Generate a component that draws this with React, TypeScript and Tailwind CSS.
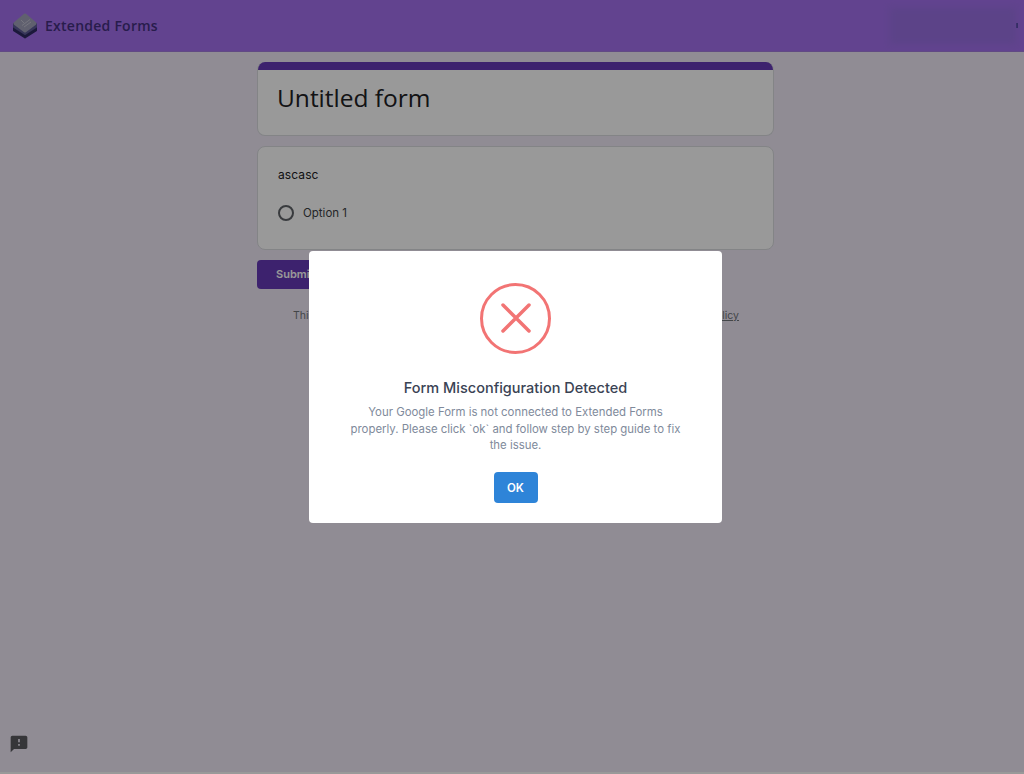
import React from 'react'

function Logo() {
  return (
    <svg width="26" height="26" viewBox="0 0 26 26" className="shrink-0" strokeLinejoin="round">
      <path d="M2 14 L13 8 L24 14 L24 17.5 L13 24.5 L2 17.5 Z" fill="#2f2a63" stroke="#2f2a63" strokeWidth="2" />
      <path d="M2 11 L13 5 L24 11 L24 14 L13 21 L2 14 Z" fill="#5d5a96" stroke="#5d5a96" strokeWidth="2" />
      <path d="M3 10.5 L13 2 L23 10.5 L13 18 Z" fill="#a0a0ba" stroke="#a0a0ba" strokeWidth="3" />
      <path d="M9 7 L12 10 M18 6.5 L10 12.5 M19 9 L12 14" stroke="#c4c4d2" strokeWidth="1" fill="none" />
    </svg>
  )
}

function FeedbackIcon() {
  return (
    <svg width="20" height="20" viewBox="0 0 24 24" fill="#5a5a60">
      <path d="M20 2H4c-1.1 0-1.99.9-1.99 2L2 22l4-4h14c1.1 0 2-.9 2-2V4c0-1.1-.9-2-2-2zm-7 12h-2v-2h2v2zm0-4h-2V6h2v4z" />
    </svg>
  )
}

function ErrorIcon() {
  return (
    <svg width="71" height="71" viewBox="0 0 71 71" fill="none" stroke="#f27474">
      <circle cx="35.5" cy="35.5" r="34" strokeWidth="3" />
      <path d="M23 22 L49 48 M49 22 L23 48" strokeWidth="3.5" strokeLinecap="round" />
    </svg>
  )
}

export default function App() {
  return (
    <div className="relative flex h-[774px] w-[1024px] flex-col overflow-hidden bg-[#f0eaf7] font-['Inter',sans-serif]">
      {/* Header */}
      <header className="flex h-[52px] items-center justify-between border-b border-[#a27cdc] bg-[#a371ee] pl-[12px] pr-[6px]">
        <div className="flex items-center gap-[7px]">
          <Logo />
          <span className="font-['Open_Sans',sans-serif] text-[14px] font-semibold tracking-[0.25px] text-[#43307f]">
            Extended Forms
          </span>
        </div>
        <div className="flex items-center">
          <div className="h-[36px] w-[126px] bg-[#9971e3] blur-[3px]" />
          <div className="h-[5px] w-[2px] bg-[#3a3a8c]" />
        </div>
      </header>

      {/* Form */}
      <main className="ml-[257px] flex w-[517px] flex-1 flex-col pt-[10px]">
        <section className="h-[74px] overflow-hidden rounded-[8px] border border-t-0 border-[#dadce0] bg-white">
          <div className="h-[8px] bg-[#673ab7]" />
          <h1 className="pl-[19px] pt-[9px] font-['Open_Sans',sans-serif] text-[24.5px] leading-[38px] text-[#202124]">
            Untitled form
          </h1>
        </section>

        <section className="mt-[10px] h-[104px] rounded-[8px] border border-[#dadce0] bg-white pl-[20px] pt-[20px]">
          <p className="text-[12px] leading-[16px] tracking-[0.1px] text-[#202124]">ascasc</p>
          <div className="mt-[22px] flex items-center gap-[9px]">
            <div className="h-[16px] w-[16px] rounded-full border-2 border-[#5f6368]" />
            <span className="text-[11.5px] leading-[16px] text-[#3c4043]">Option 1</span>
          </div>
        </section>

        <button className="mt-[10px] h-[29px] w-[90px] rounded-[4px] bg-[#673ab7] pl-[19px] text-left text-[11px] font-semibold text-white">
          Submit
        </button>

        <div className="mt-[20px] flex w-[482px] justify-between pl-[36px] text-[10.5px] leading-[13px] text-[#70757a]">
          <span>This content is neither created nor endorsed by Google.</span>
          <span className="underline">Privacy Policy</span>
        </div>
      </main>

      <div className="h-[2px] bg-white" />

      {/* Feedback button */}
      <div className="absolute bottom-[20px] left-[9px]">
        <FeedbackIcon />
      </div>

      {/* Modal overlay */}
      <div className="absolute inset-0 flex items-center justify-center bg-black/40 pl-[7px]">
        <div className="flex h-[272px] w-[413px] flex-col items-center rounded-[4px] bg-white pt-[32px]">
          <ErrorIcon />
          <h2 className="mt-[24px] text-[14.5px] font-medium leading-[20px] text-[#3a4354]">
            Form Misconfiguration Detected
          </h2>
          <p className="mt-[6px] w-[335px] text-center text-[11.4px] leading-[16.5px] text-[#808a9b]">
            Your Google Form is not connected to Extended Forms properly. Please click `ok` and follow step by step guide to fix the issue.
          </p>
          <button className="mt-[18px] h-[31px] w-[44px] rounded-[4px] bg-[#2e84d8] pt-[3px] text-[11.5px] font-semibold text-white">
            OK
          </button>
        </div>
      </div>
    </div>
  )
}
